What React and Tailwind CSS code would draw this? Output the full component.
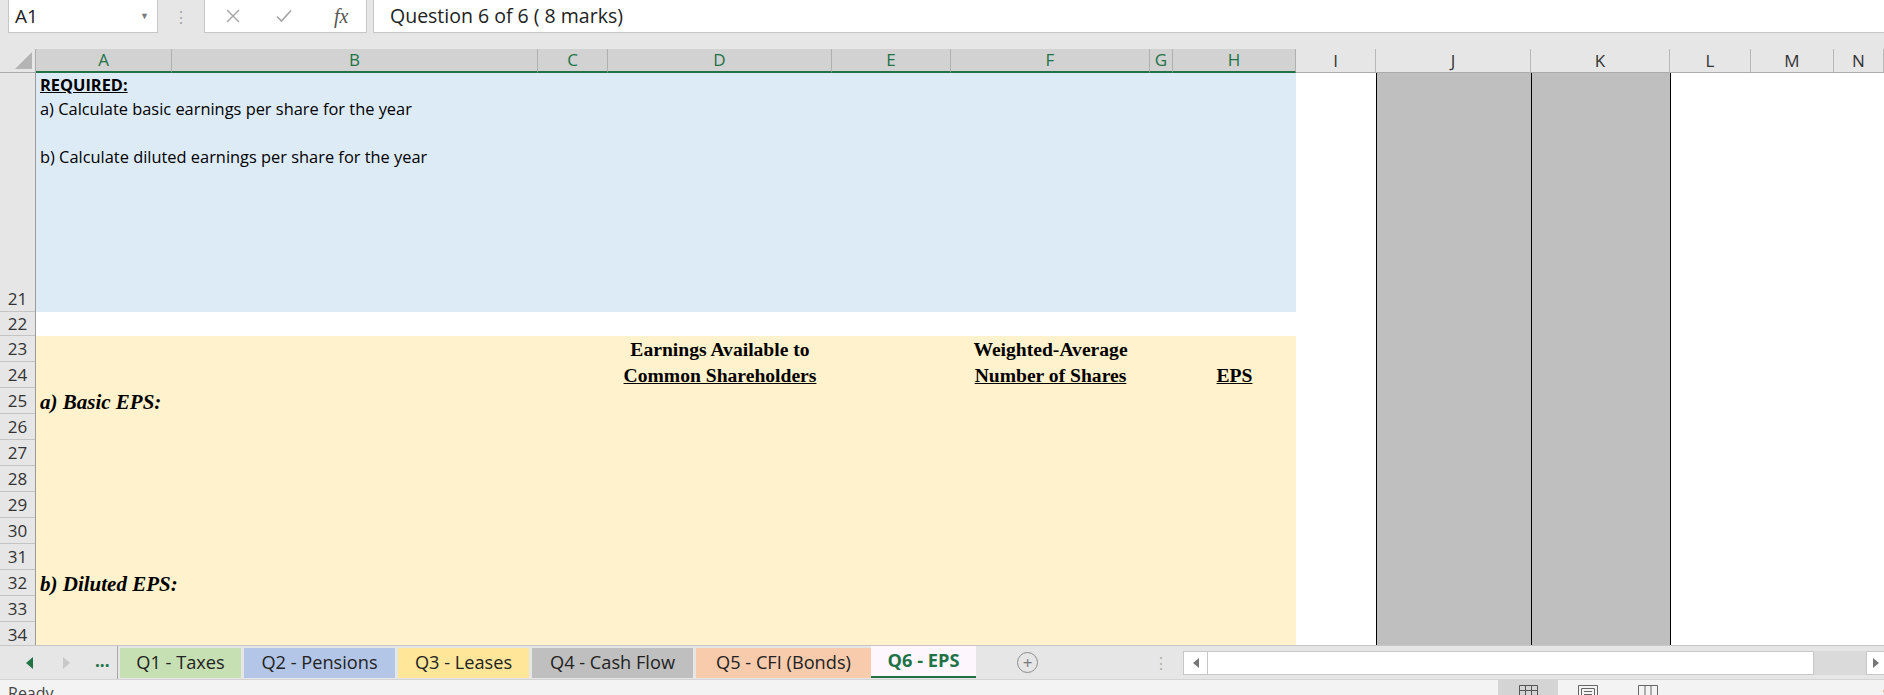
import React from "react";

const HEAD = [
  { l: "A", w: "w-[136px]", sel: true },
  { l: "B", w: "w-[366px]", sel: true },
  { l: "C", w: "w-[70px]", sel: true },
  { l: "D", w: "w-[224px]", sel: true },
  { l: "E", w: "w-[119px]", sel: true },
  { l: "F", w: "w-[199px]", sel: true },
  { l: "G", w: "w-[23px]", sel: true },
  { l: "H", w: "w-[123px]", sel: true },
  { l: "I", w: "w-[80px]" },
  { l: "J", w: "w-[155px]" },
  { l: "K", w: "w-[139px]" },
  { l: "L", w: "w-[81px]" },
  { l: "M", w: "w-[83px]" },
  { l: "N", w: "flex-1" },
];

const TABS = [
  { name: "Q1 - Taxes", cls: "w-[121px] bg-[#c6e0b4]" },
  { name: "Q2 - Pensions", cls: "w-[151px] bg-[#b4c6e7]" },
  { name: "Q3 - Leases", cls: "w-[131px] bg-[#ffe699]" },
  { name: "Q4 - Cash Flow", cls: "w-[161px] bg-[#bfbfbf]" },
  { name: "Q5 - CFI (Bonds)", cls: "w-[175px] bg-[#f8cbad]" },
];

const ROWS = [23, 24, 25, 26, 27, 28, 29, 30, 31, 32, 33, 34];

function FormulaBar() {
  return (
    <div className="h-[33px] flex bg-[#e6e6e6] text-[#222]">
      <div className="ml-[8px] w-[150px] bg-white border-x border-b border-[#c6c6c6] flex items-center pl-[6px] pr-[8px] text-[19px]">
        <span className="flex-1">A1</span>
        <span className="text-[9px] text-[#7a7a7a]">▼</span>
      </div>
      <div className="w-[46px] flex items-center justify-center text-[#a6a6a6] text-[16px]">⋮</div>
      <div className="w-[163px] bg-white border-x border-b border-[#c6c6c6] flex items-center text-[#a3a3a3]">
        <svg className="ml-[21px]" width="14" height="14" viewBox="0 0 14 14">
          <path d="M1 1L13 13M13 1L1 13" stroke="#a3a3a3" strokeWidth="1.4" fill="none" />
        </svg>
        <svg className="ml-[36px]" width="16" height="14" viewBox="0 0 16 14">
          <path d="M1 7.5L5.5 12L15 1.5" stroke="#a3a3a3" strokeWidth="1.6" fill="none" />
        </svg>
        <span className="ml-[42px] font-['Liberation_Serif',serif] italic text-[20px] text-[#555]">fx</span>
      </div>
      <div className="ml-[6px] flex-1 bg-white border-l border-b border-[#c6c6c6] flex items-center pl-[16px] text-[19.5px]">
        Question 6 of 6 ( 8 marks)
      </div>
    </div>
  );
}

function HeaderRow() {
  return (
    <div className="flex h-[24px]">
      <div className="w-[36px] bg-[#e6e6e6] border-r border-b border-[#ababab] flex items-end justify-end pr-[3px] pb-[3px]">
        <svg width="17" height="17" viewBox="0 0 17 17">
          <path d="M17 0L17 17L0 17Z" fill="#b4b4b4" />
        </svg>
      </div>
      {HEAD.map((h) => (
        <div
          key={h.l}
          className={
            h.sel
              ? `${h.w} shrink-0 bg-[#d2d2d2] text-[#217346] border-r border-[#b0b0b0] border-b-2 border-b-[#217346] flex items-center justify-center text-[17px]`
              : `${h.w} shrink-0 bg-[#e6e6e6] text-[#333] border-r border-[#b8b8b8] border-b border-b-[#ababab] flex items-center justify-center text-[17px]`
          }
        >
          {h.l}
        </div>
      ))}
    </div>
  );
}

function RowHeaders() {
  return (
    <div className="w-[36px] shrink-0 bg-[#e6e6e6] border-r border-[#9b9b9b] text-[#333] text-[17px] flex flex-col">
      <div className="h-[239px] shrink-0 border-b border-[#c4c4c4] flex items-end justify-center">21</div>
      <div className="h-[24px] shrink-0 border-b border-[#c4c4c4] flex items-center justify-center">22</div>
      {ROWS.map((r) => (
        <div key={r} className="h-[26px] shrink-0 border-b border-[#c4c4c4] flex items-center justify-center">
          {r}
        </div>
      ))}
    </div>
  );
}

function Sheet() {
  const serif = "font-['Liberation_Serif',serif] font-bold text-[19.6px] text-black";
  const label = "font-['Liberation_Serif',serif] font-bold italic text-[21px] text-black";
  return (
    <div className="flex h-[572px] overflow-hidden">
      <RowHeaders />
      <div className="w-[1260px] shrink-0 flex flex-col">
        {/* Required block */}
        <div className="h-[239px] shrink-0 bg-[#ddebf7] pl-[4px] text-[16.4px] text-black leading-[24px]">
          <p className="font-bold underline">REQUIRED:</p>
          <p>a) Calculate basic earnings per share for the year</p>
          <p>&nbsp;</p>
          <p>b) Calculate diluted earnings per share for the year</p>
        </div>
        <div className="h-[24px] shrink-0 bg-white" />
        {/* Answer block */}
        <div className="flex-1 bg-[#fff2cc]">
          <div className="grid grid-cols-[136px_366px_70px_224px_119px_199px_23px_123px] h-[26px] items-end leading-[24px]">
            <div className="col-start-4 text-center"><span className={serif}>Earnings Available to</span></div>
            <div className="col-start-6 text-center"><span className={serif}>Weighted-Average</span></div>
          </div>
          <div className="grid grid-cols-[136px_366px_70px_224px_119px_199px_23px_123px] h-[26px] items-end leading-[24px]">
            <div className="col-start-4 text-center"><span className={`${serif} underline`}>Common Shareholders</span></div>
            <div className="col-start-6 text-center"><span className={`${serif} underline`}>Number of Shares</span></div>
            <div className="col-start-8 text-center"><span className={`${serif} underline`}>EPS</span></div>
          </div>
          <div className="h-[26px] flex items-end pl-[4px] leading-[24px]">
            <span className={label}>a) Basic EPS:</span>
          </div>
          <div className="h-[156px]" />
          <div className="h-[26px] flex items-end pl-[4px] leading-[24px]">
            <span className={label}>b) Diluted EPS:</span>
          </div>
        </div>
      </div>
      <div className="w-[80px] shrink-0 bg-white" />
      <div className="w-[155px] shrink-0 bg-[#bfbfbf] border-l border-black" />
      <div className="w-[140px] shrink-0 bg-[#bfbfbf] border-x border-black" />
      <div className="flex-1 bg-white" />
    </div>
  );
}

function TabBar() {
  return (
    <div className="h-[34px] bg-[#e6e6e6] border-t border-[#c6c6c6] flex items-center text-[#222]">
      <div className="w-[118px] h-full flex items-center border-r border-[#a8a8a8] my-[4px]">
        <svg className="ml-[26px]" width="8" height="12" viewBox="0 0 8 12"><path d="M7 0L7 12L0 6Z" fill="#217346" /></svg>
        <svg className="ml-[28px]" width="8" height="12" viewBox="0 0 8 12"><path d="M1 0L1 12L8 6Z" fill="#c8c8c8" /></svg>
        <span className="ml-[25px] text-[#217346] font-bold text-[17px] leading-none pb-[4px]">...</span>
      </div>
      <div className="flex items-stretch h-[30px] ml-[2px] gap-[3px] text-[18.2px]">
        {TABS.map((t) => (
          <div key={t.name} className={`${t.cls} flex items-center justify-center`}>{t.name}</div>
        ))}
        <div className="w-[105px] -mt-[2px] h-[32px] bg-[#fdf7fd] border-b-2 border-[#217346] flex items-center justify-center font-bold text-[#217346] -ml-[3px]">
          Q6 - EPS
        </div>
      </div>
      <div className="ml-[41px] w-[21px] h-[21px] rounded-full border border-[#8c8c8c] flex items-center justify-center text-[#777] text-[17px] leading-none">+</div>
      <div className="ml-[115px] text-[#b0b0b0] text-[16px]">⋮</div>
      <div className="ml-[14px] flex-1 h-[24px] flex">
        <div className="w-[25px] bg-white border border-[#c6c6c6] flex items-center justify-center">
          <svg width="6" height="10" viewBox="0 0 6 10"><path d="M6 0L6 10L0 5Z" fill="#777" /></svg>
        </div>
        <div className="flex-1 bg-white border-y border-r border-[#c6c6c6]" />
        <div className="w-[52px] bg-[#dadada]" />
        <div className="w-[18px] bg-white border-y border-l border-[#c6c6c6] flex items-center justify-center">
          <svg width="6" height="10" viewBox="0 0 6 10"><path d="M0 0L0 10L6 5Z" fill="#777" /></svg>
        </div>
      </div>
    </div>
  );
}

function StatusBar() {
  return (
    <div className="h-[16px] bg-[#f3f3f3] border-t border-[#d4d4d4] flex text-[16px] text-[#444] overflow-hidden">
      <div className="pl-[8px] pt-[3px] leading-[20px] flex-1">Ready</div>
      <div className="w-[60px] bg-[#d4d4d4] flex justify-center pt-[5px]">
        <svg width="19" height="14" viewBox="0 0 19 14">
          <path d="M0.5 0.5H18.5V14M0.5 0.5V14M6.5 0.5V14M12.5 0.5V14M0.5 5.5H18.5M0.5 10.5H18.5" stroke="#555" fill="none" />
        </svg>
      </div>
      <div className="w-[60px] flex justify-center pt-[5px]">
        <svg width="20" height="14" viewBox="0 0 20 14">
          <path d="M0.5 0.5H19.5V14M0.5 0.5V14M3.5 3.5H16.5V14M3.5 3.5V14M6 6.5H14M6 9.5H14" stroke="#666" fill="none" />
        </svg>
      </div>
      <div className="w-[60px] flex justify-center pt-[5px]">
        <svg width="20" height="14" viewBox="0 0 20 14">
          <path d="M0.5 0.5H19.5V14M0.5 0.5V14M7 0.5V14M13 0.5V14" stroke="#666" fill="none" />
        </svg>
      </div>
      <div className="w-[206px] flex items-start">
        <div className="ml-[86px] mt-[6px] w-[8px] h-[10px] bg-[#777]" />
        <div className="ml-[8px] mt-[11px] w-px h-[5px] bg-[#999]" />
        <div className="ml-[87px] mt-[10px] w-px h-[6px] bg-[#999]" />
        <span className="ml-[24px] text-[14px] leading-[20px] pt-[3px]">96%</span>
      </div>
    </div>
  );
}

export default function App() {
  return (
    <div className="w-[1884px] h-[695px] overflow-hidden bg-white font-['Open_Sans',sans-serif]">
      <FormulaBar />
      <div className="h-[16px] bg-[#e6e6e6]" />
      <HeaderRow />
      <Sheet />
      <TabBar />
      <StatusBar />
    </div>
  );
}
